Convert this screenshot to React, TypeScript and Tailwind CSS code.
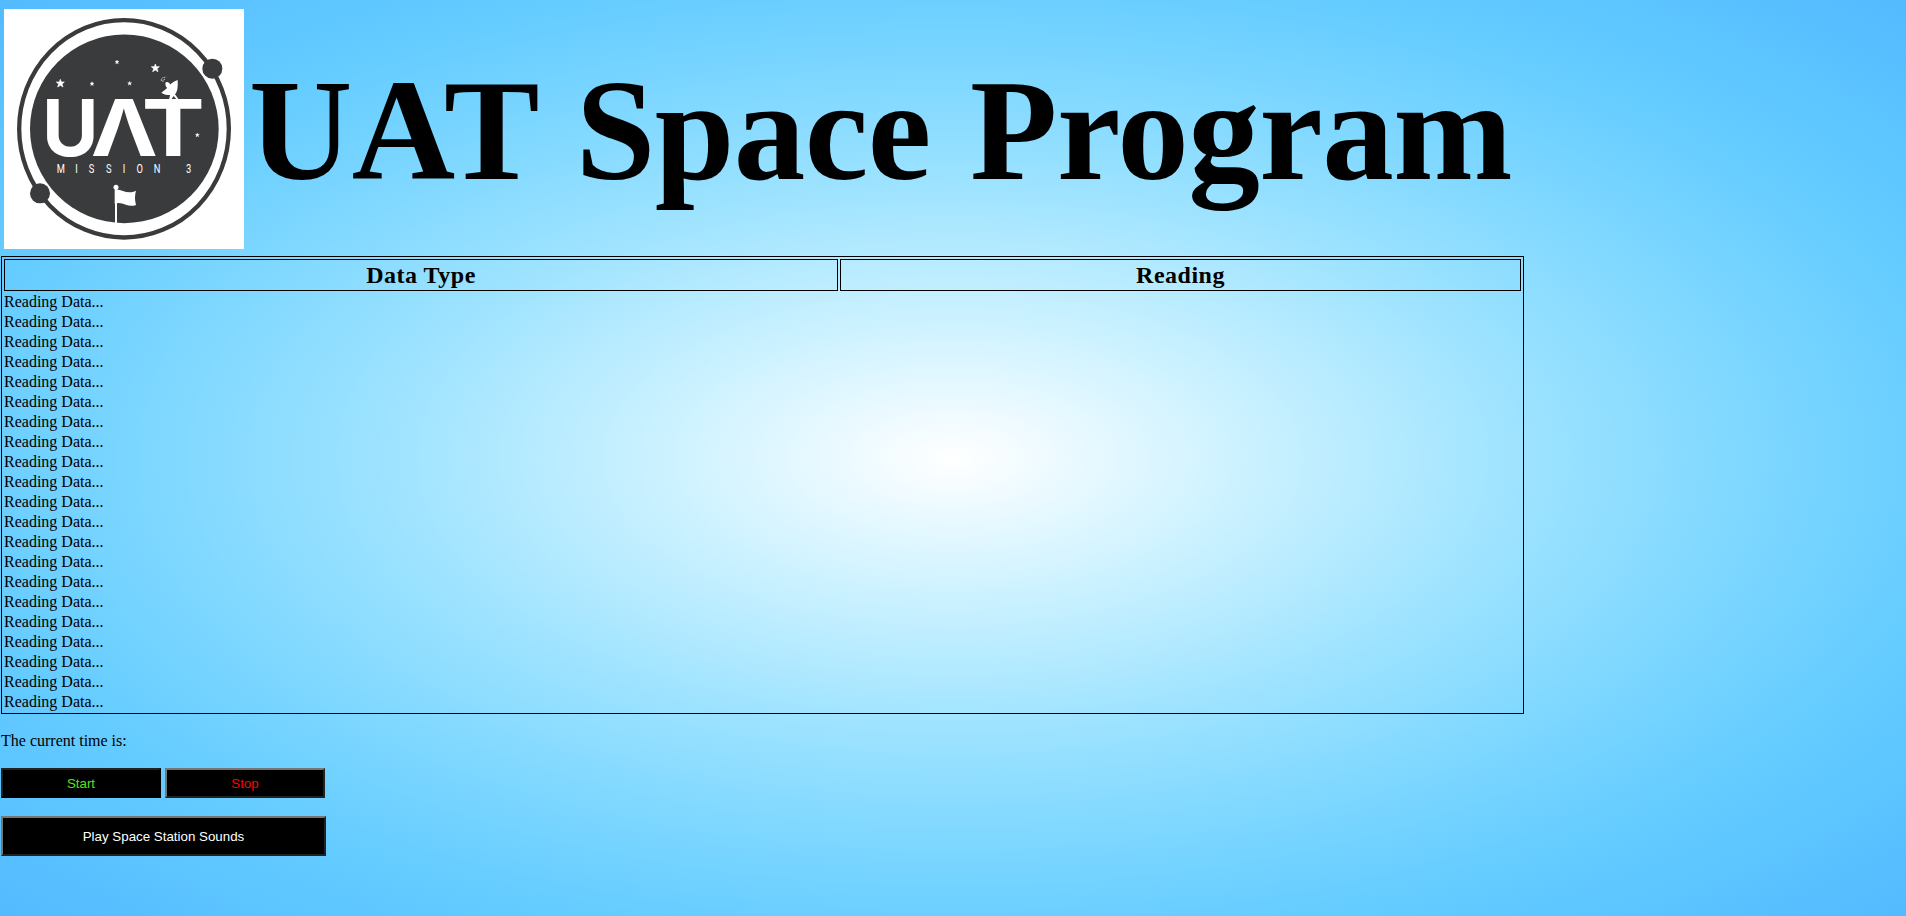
const rows = Array.from({ length: 21 }, () => 'Reading Data...');

const star = 'M0-12 3-4 12-4 5 2 8 11 0 6-8 11-5 2-12-4-3-4Z';

function Logo() {
  return (
    <svg className="h-60 w-60 shrink-0 bg-white" viewBox="12 27 720 720" role="img">
      <ellipse cx="372" cy="386.500" rx="314.500" ry="326" fill="none" stroke="#3a3b3d" strokeWidth="13" />
      <circle cx="373" cy="386.500" r="283" fill="#3a3b3d" />
      <circle cx="637" cy="206" r="30" fill="#3a3b3d" />
      <circle cx="120" cy="580" r="30" fill="#3a3b3d" />
      <g fill="#fff">
        <g stroke="#fff" strokeWidth="2" strokeLinejoin="round">
          <path d={star} transform="translate(181 250)" />
          <path d={star} transform="translate(276 251) scale(.5)" />
          <path d={star} transform="translate(351 186) scale(.5)" />
          <path d={star} transform="translate(466 204)" />
          <path d={star} transform="translate(389 250) scale(.5)" />
          <path d={star} transform="translate(592 405) scale(.5)" />
        </g>
        <path d="M533 240C520 244 512 252 507 257L499 266 484 278C492 284 502 285 510 285L507 300H513L521 288 533 302H539L525 283C533 275 534 258 533 240Z" />
        <path d="M496 248Q502 243 508 250L514 262 503 266 497 258Z" />
        <path d="M484 243Q482 231 499 232M489 246Q488 237 496 238" fill="none" stroke="#fff" strokeWidth="2" strokeDasharray="5 2" />
        <path d="M344 569C365 564 379 586 408 572Q402 592 408 615C382 625 370 602 344 611Z" />
        <circle cx="348" cy="562" r="7.500" />
        <path d="M345 565H351V669H345Z" />
      </g>
      <g fill="#fff" className="font-['Inter'] font-bold">
        <text transform="translate(126 469) scale(.99 1)" fontSize="234">U</text>
        <text transform="translate(272 469) scale(1.150 1)" fontSize="234">Λ</text>
        <text transform="translate(425 469) scale(1.210 1)" fontSize="234">T</text>
      </g>
      <text
        className="font-['Roboto']"
        fill="#fff"
        fontSize="40"
        transform="scale(.7 1)"
        y="520"
        x="243 323 380 454 526 585 659 700 797"
      >
        MISSION 3
      </text>
    </svg>
  );
}

export default function App() {
  return (
    <div className="h-[916px] w-full overflow-hidden bg-[radial-gradient(#ffffff,#cdf2ff_21%,#9ee3ff_42%,#80d8ff_58%,#6bcfff_71%,#63cbff_77%,#53baff)] p-px font-['Liberation_Serif',serif] text-base leading-[18px] text-black">
      <header className="flex h-[255px] items-start pl-[3px] pt-2">
        <Logo />
        <h1 className="ml-[5px] mt-[39px] whitespace-nowrap text-[143.2px] font-bold leading-[165px] tracking-[-0.6px] [word-spacing:4.2px]">
          UAT Space Program
        </h1>
      </header>
      <main>
        <table className="h-[458px] w-[1523px] border-separate border-spacing-[2px] border border-black">
          <thead>
            <tr className="h-8 text-2xl leading-[28px] tracking-[0.5px]">
              <th className="w-[834px] border border-black p-px">Data Type</th>
              <th className="border border-black p-px">Reading</th>
            </tr>
          </thead>
          <tbody>
            {rows.map((text, i) => (
              <tr key={i}>
                <td className="h-[18px] p-0">{text}</td>
              </tr>
            ))}
          </tbody>
        </table>
        <p className="mt-[18px]">The current time is:</p>
        <div className="mt-[18px] flex gap-1 font-['Liberation_Sans',sans-serif] text-[13.333px]">
          <button className="h-[30px] w-40 border-2 border-b-black border-l-[#222] border-r-black border-t-[#222] bg-black pt-0.5 text-[#55e41c]">Start</button>
          <button className="h-[30px] w-40 border-2 border-b-[#222] border-l-[#767676] border-r-[#222] border-t-[#767676] bg-black pt-0.5 text-[#ff0000]">Stop</button>
        </div>
        <button className="mt-[18px] block h-10 w-[325px] border-2 border-b-[#222] border-l-[#767676] border-r-[#222] border-t-[#767676] bg-black pt-0.5 font-['Liberation_Sans',sans-serif] text-[13.333px] text-white">
          Play Space Station Sounds
        </button>
      </main>
    </div>
  );
}
